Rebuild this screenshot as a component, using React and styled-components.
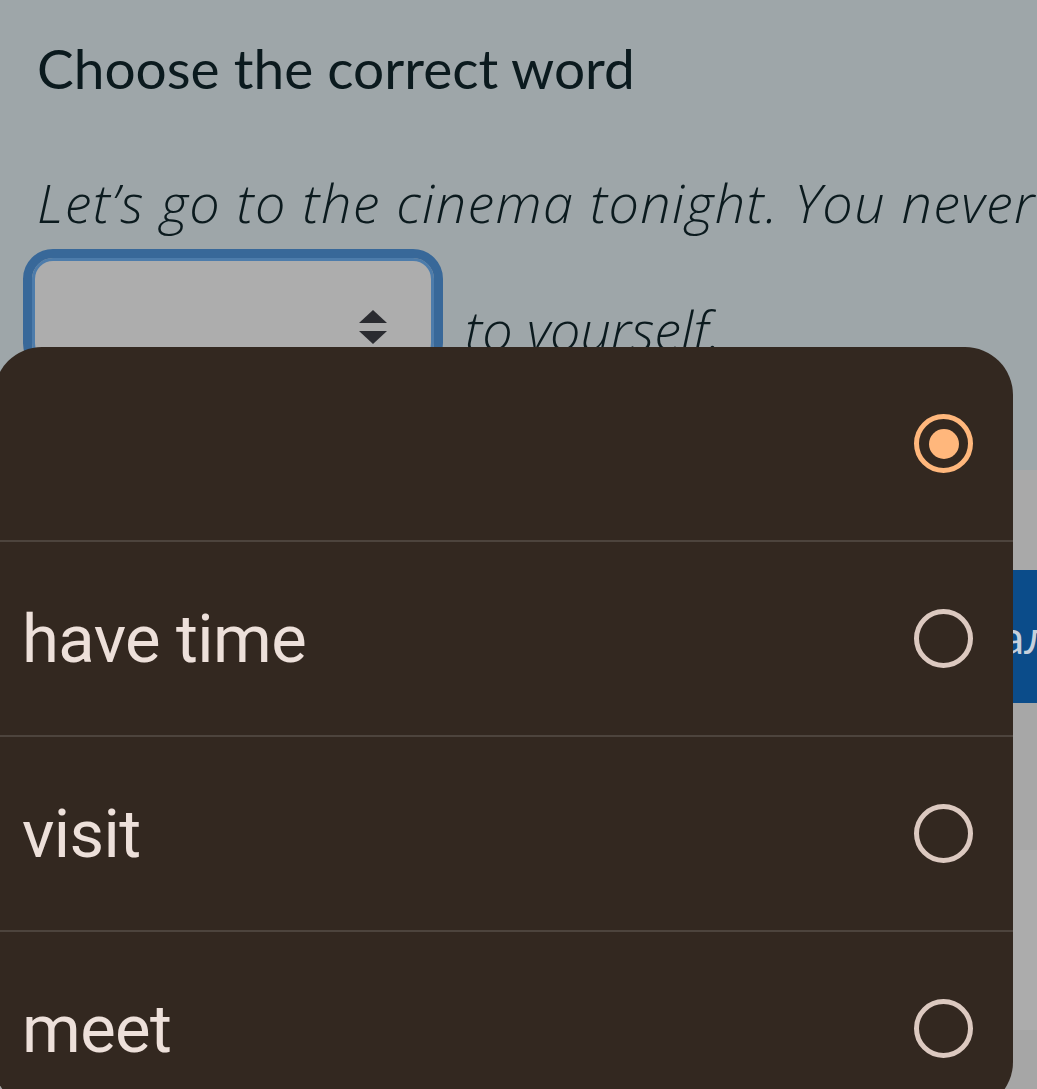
import React from "react";
import styled, { createGlobalStyle } from "styled-components";

const GlobalStyle = createGlobalStyle`
  html, body {
    margin: 0;
    padding: 0;
    background: #9ea6a9;
    overflow: hidden;
  }
  body {
    width: 1037px;
    height: 1089px;
  }
`;

const Page = styled.div`
  position: relative;
  width: 1037px;
  height: 1089px;
  overflow: hidden;
  background: #9ea6a9;
  display: flex;
  flex-direction: column;
`;

const Task = styled.div`
  padding: 33px 0 0 37px;
  font-family: "Lato", "Open Sans", sans-serif;
  color: #0b1a1e;
`;

const Heading = styled.h1`
  margin: 0;
  font-size: 55px;
  font-weight: 400;
  line-height: 70px;
`;

const Sentence = styled.div`
  margin-top: 64px;
  font-family: "Open Sans", "Lato", sans-serif;
  font-size: 54px;
  font-weight: 300;
  font-style: italic;
  line-height: 70px;
`;

const Line = styled.div`
  white-space: nowrap;
  letter-spacing: 1.4px;
`;

const BlankRow = styled.div`
  display: flex;
  align-items: flex-start;
  gap: 22px;
  margin-top: 12px;
  margin-left: -14px;
`;

const SelectBox = styled.div`
  width: 420px;
  height: 124px;
  box-sizing: border-box;
  border: 9px solid #386899;
  border-radius: 30px;
  box-shadow: inset 0 0 0 3px #4d7cab;
  background: #adadad;
  display: flex;
  justify-content: flex-end;
  padding: 52px 46px 0 0;
`;

const AfterText = styled.span`
  line-height: 70px;
  margin-top: 45px;
`;

const Card = styled.div`
  margin-top: 97px;
  flex: 1;
  display: flex;
  flex-direction: column;
  background: #a9a9a9;
  font-family: "Lato", "Open Sans", sans-serif;
`;

const Spacer = styled.div`
  height: ${(p) => p.h}px;
  background: ${(p) => p.bg};
`;

const SubmitButton = styled.div`
  height: 133px;
  margin-top: 100px;
  background: #0b4c8a;
  color: #c6d0dc;
  font-size: 46px;
  display: flex;
  align-items: center;
  justify-content: flex-end;
  margin-right: -14px;
  white-space: nowrap;
`;

const Sheet = styled.div`
  position: absolute;
  left: -6px;
  top: 347px;
  width: 1019px;
  height: 763px;
  background: #332820;
  border-radius: 48px;
  overflow: hidden;
  font-family: "Roboto", sans-serif;
`;

const Option = styled.div`
  height: 193px;
  display: flex;
  align-items: center;
  justify-content: space-between;
  padding: 0 40px 0 28px;
  border-top: ${(p) => (p.first ? "none" : "2px solid #4d443d")};
  color: #ede0da;
  font-size: 67px;
  letter-spacing: -0.6px;
`;

const Radio = styled.span`
  width: 59px;
  height: 59px;
  box-sizing: border-box;
  border-radius: 50%;
  border: 5px solid ${(p) => (p.checked ? "#ffb77c" : "#dcc9c0")};
  display: flex;
  align-items: center;
  justify-content: center;
  flex: none;

  &::after {
    content: "";
    display: ${(p) => (p.checked ? "block" : "none")};
    width: 30px;
    height: 30px;
    border-radius: 50%;
    background: #ffb77c;
  }
`;

function UpDown() {
  return (
    <svg width="30" height="36" viewBox="0 0 30 36">
      <path d="M15 0 L29 13 L1 13 Z" fill="#2a2b30" />
      <path d="M1 21 L29 21 L15 34 Z" fill="#2a2b30" />
    </svg>
  );
}

const options = ["", "have time", "visit", "meet"];

export default function App() {
  return (
    <Page>
      <GlobalStyle />
      <Task>
        <Heading>Choose the correct word</Heading>
        <Sentence>
          <Line>Let’s go to the cinema tonight. You never</Line>
          <BlankRow>
            <SelectBox>
              <UpDown />
            </SelectBox>
            <AfterText>to yourself.</AfterText>
          </BlankRow>
        </Sentence>
      </Task>
      <Card>
        <SubmitButton>Показать сигнал</SubmitButton>
        <Spacer h={147} bg="#a7a7a7" />
        <Spacer h={180} bg="#acacac" />
        <Spacer h={80} bg="#a6a6a6" />
      </Card>
      <Sheet>
        {options.map((o, i) => (
          <Option key={i} first={i === 0}>
            <span>{o}</span>
            <Radio checked={i === 0} />
          </Option>
        ))}
      </Sheet>
    </Page>
  );
}
